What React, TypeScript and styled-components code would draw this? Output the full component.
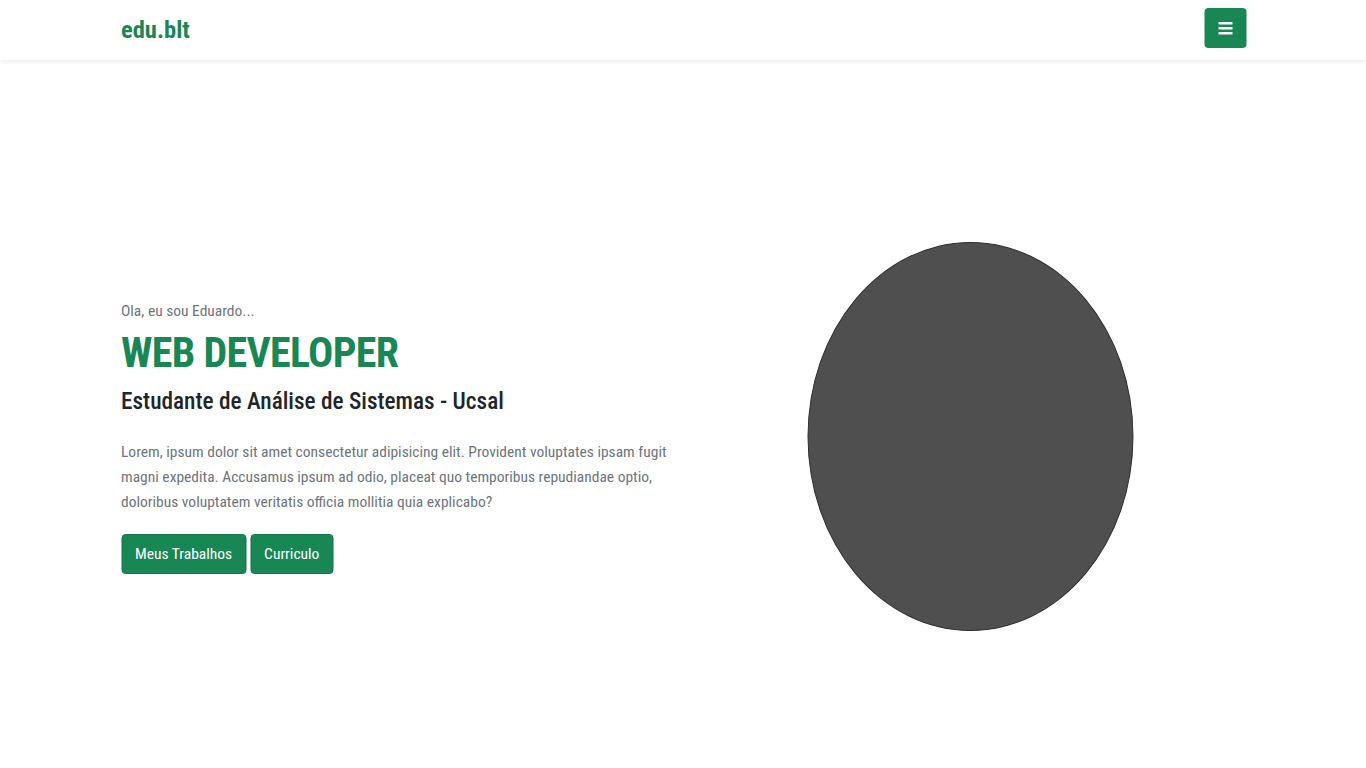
import React from "react";
import styled, { createGlobalStyle } from "styled-components";

const GlobalStyle = createGlobalStyle`
  html, body { margin: 0; padding: 0; background: #ffffff; }
  body { font-family: "Roboto Condensed", "Roboto", sans-serif; color: #212529; overflow: hidden; }
  * { box-sizing: border-box; }
`;

const NavBar = styled.header`
  height: 60px;
  background: #ffffff;
  box-shadow: 0 2px 4px rgba(0, 0, 0, 0.07);
  position: relative;
  z-index: 1;
`;

const Container = styled.div`
  width: 1125px;
  margin: 0 auto;
  transform: translateX(0.5px);
`;

const NavInner = styled(Container)`
  height: 100%;
  display: flex;
  justify-content: space-between;
  align-items: flex-start;
  padding-top: 8px;
`;

const Brand = styled.a`
  font-family: "Roboto Condensed", sans-serif;
  font-weight: 700;
  font-size: 24.5px;
  line-height: 28px;
  color: #198754;
  text-decoration: none;
  margin-top: 8px;
`;

const Toggler = styled.button`
  width: 42px;
  height: 40px;
  border: 0;
  border-radius: 4px;
  background: #198754;
  display: flex;
  align-items: center;
  justify-content: center;
  padding: 0;
  cursor: pointer;
`;

const Hero = styled.main`
  height: 708px;
  padding-top: 44px;
  display: flex;
  align-items: center;
`;

const HeroGrid = styled(Container)`
  display: grid;
  grid-template-columns: 562px 1fr;
  align-items: center;
`;

const TextColumn = styled.div`
  display: flex;
  flex-direction: column;
  align-items: flex-start;
  padding-top: 3px;
`;

const Intro = styled.p`
  margin: 0;
  font-size: 15.5px;
  line-height: 21px;
  color: #6c757d;
`;

const Title = styled.h1`
  margin: 6px 0 0;
  font-size: 42px;
  line-height: 1.2;
  letter-spacing: -0.7px;
  font-weight: 700;
  color: #198754;
`;

const Subtitle = styled.h2`
  margin: 10px 0 0;
  font-size: 23.3px;
  line-height: 1.2;
  font-weight: 500;
  color: #212529;
`;

const Lead = styled.p`
  margin: 24px 0 0;
  font-size: 15.5px;
  line-height: 25px;
  color: #6c757d;
`;

const Actions = styled.div`
  margin-top: 19px;
  display: flex;
  gap: 4px;
`;

const ActionButton = styled.a`
  height: 40px;
  padding: 0 13px;
  display: inline-flex;
  align-items: center;
  background: #198754;
  border: 1px solid #157347;
  border-radius: 4px;
  color: #ffffff;
  font-size: 15.5px;
  text-decoration: none;
`;

const ImageColumn = styled.div`
  display: flex;
  justify-content: center;
  padding-left: 11px;
`;

const Avatar = styled.div`
  width: 326px;
  height: 389px;
  border-radius: 50%;
  background: #4f4f4f;
  border: 1px solid #2e2e2e;
`;

const MenuIcon = () => (
  <svg width="16" height="14" viewBox="0 0 16 14" aria-hidden="true">
    <rect x="1" y="1" width="14" height="2.4" rx="0.5" fill="#ffffff" />
    <rect x="1" y="6" width="14" height="2.4" rx="0.5" fill="#ffffff" />
    <rect x="1" y="11" width="14" height="2.4" rx="0.5" fill="#ffffff" />
  </svg>
);

export default function App() {
  return (
    <>
      <GlobalStyle />
      <NavBar>
        <NavInner>
          <Brand href="#">edu.blt</Brand>
          <Toggler aria-label="Menu">
            <MenuIcon />
          </Toggler>
        </NavInner>
      </NavBar>
      <Hero>
        <HeroGrid>
          <TextColumn>
            <Intro>Ola, eu sou Eduardo...</Intro>
            <Title>WEB DEVELOPER</Title>
            <Subtitle>Estudante de Análise de Sistemas - Ucsal</Subtitle>
            <Lead>
              Lorem, ipsum dolor sit amet consectetur adipisicing elit. Provident voluptates ipsam fugit
              magni expedita. Accusamus ipsum ad odio, placeat quo temporibus repudiandae optio,
              doloribus voluptatem veritatis officia mollitia quia explicabo?
            </Lead>
            <Actions>
              <ActionButton href="#">Meus Trabalhos</ActionButton>
              <ActionButton href="#">Curriculo</ActionButton>
            </Actions>
          </TextColumn>
          <ImageColumn>
            <Avatar />
          </ImageColumn>
        </HeroGrid>
      </Hero>
    </>
  );
}
